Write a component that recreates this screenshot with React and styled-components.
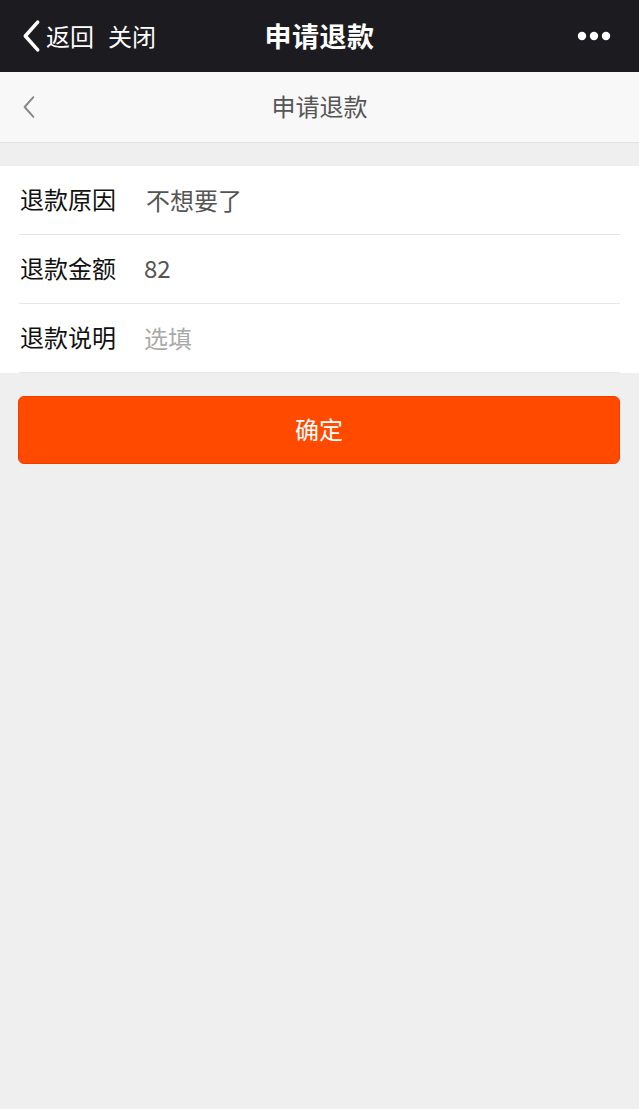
import React from 'react';
import styled, { createGlobalStyle } from 'styled-components';

const GlobalStyle = createGlobalStyle`
  html, body {
    margin: 0;
    padding: 0;
    background: #efeff0;
  }
  body {
    font-family: "Noto Sans CJK SC", "Noto Sans", sans-serif;
  }
`;

const Page = styled.div`
  width: 639px;
  min-height: 1109px;
  background: #efeff0;
`;

const TopBar = styled.div`
  height: 72px;
  background: #1c1b1f;
  display: grid;
  grid-template-columns: 1fr auto 1fr;
  align-items: center;
  color: #fff;
`;

const TopLeft = styled.div`
  display: flex;
  align-items: center;
  padding-left: 21px;
  font-size: 24px;
`;

const TopLink = styled.span`
  margin-left: ${(p) => p.$before || 0}px;
  margin-right: ${(p) => p.$after || 0}px;
  line-height: 1;
`;

const TopTitle = styled.div`
  font-size: 27px;
  font-weight: 700;
  letter-spacing: 0.5px;
  margin-top: -2px;
`;

const TopRight = styled.div`
  display: flex;
  justify-content: flex-end;
  padding-right: 28px;
`;

const SubHeader = styled.div`
  height: 70px;
  background: #f8f8f8;
  border-bottom: 1px solid #e2e2e2;
  position: relative;
  display: flex;
  align-items: center;
  justify-content: center;
`;

const SubBack = styled.div`
  position: absolute;
  left: 22px;
  top: 50%;
  transform: translateY(-50%);
  display: flex;
`;

const SubTitle = styled.div`
  font-size: 24px;
  color: #555;
  margin-top: -4px;
`;

const Form = styled.div`
  margin-top: 23px;
  background: #fff;
  padding-left: 19px;
`;

const Row = styled.div`
  height: 68px;
  display: flex;
  align-items: center;
  border-bottom: 1px solid #e6e6e6;
  margin-right: 19px;
`;

const Label = styled.div`
  width: 124px;
  padding-left: 1px;
  font-size: 24px;
  color: #111;
  margin-top: -4px;
`;

const Value = styled.div`
  font-size: 24px;
  color: ${(p) => (p.$placeholder ? '#a9a9a9' : '#555')};
  margin-left: ${(p) => p.$shift || 0}px;
  margin-top: ${(p) => p.$drop || 0}px;
`;

const Actions = styled.div`
  padding: 23px 19px 0 18px;
`;

const Button = styled.button`
  width: 100%;
  height: 68px;
  border: 1px solid #f23d00;
  border-radius: 6px;
  background: #ff4a00;
  color: #fff;
  font-family: "Noto Sans CJK SC", sans-serif;
  font-size: 24px;
  padding-bottom: 4px;
  cursor: pointer;
`;

function Chevron({ color, width, height, stroke }) {
  return (
    <svg width={width} height={height} viewBox="0 0 12 22" fill="none">
      <path
        d="M10 2 L2 11 L10 20"
        stroke={color}
        strokeWidth={stroke}
        strokeLinecap="round"
        strokeLinejoin="round"
      />
    </svg>
  );
}

function Dots() {
  return (
    <svg width="34" height="10" viewBox="0 0 34 10">
      <circle cx="5" cy="5" r="4.2" fill="#fff" />
      <circle cx="17" cy="5" r="4.2" fill="#fff" />
      <circle cx="29" cy="5" r="4.2" fill="#fff" />
    </svg>
  );
}

export default function App() {
  return (
    <Page>
      <GlobalStyle />
      <TopBar>
        <TopLeft>
          <Chevron color="#fff" width={21} height={34} stroke={2.3} />
          <TopLink $before={4} $after={14}>返回</TopLink>
          <TopLink>关闭</TopLink>
        </TopLeft>
        <TopTitle>申请退款</TopTitle>
        <TopRight>
          <Dots />
        </TopRight>
      </TopBar>
      <SubHeader>
        <SubBack>
          <Chevron color="#888" width={14} height={24} stroke={1.8} />
        </SubBack>
        <SubTitle>申请退款</SubTitle>
      </SubHeader>
      <Form>
        <Row>
          <Label>退款原因</Label>
          <Value $shift={2} $drop={-2}>不想要了</Value>
        </Row>
        <Row>
          <Label>退款金额</Label>
          <Value $drop={-4}>82</Value>
        </Row>
        <Row>
          <Label>退款说明</Label>
          <Value $placeholder $drop={-2}>选填</Value>
        </Row>
      </Form>
      <Actions>
        <Button>确定</Button>
      </Actions>
    </Page>
  );
}
